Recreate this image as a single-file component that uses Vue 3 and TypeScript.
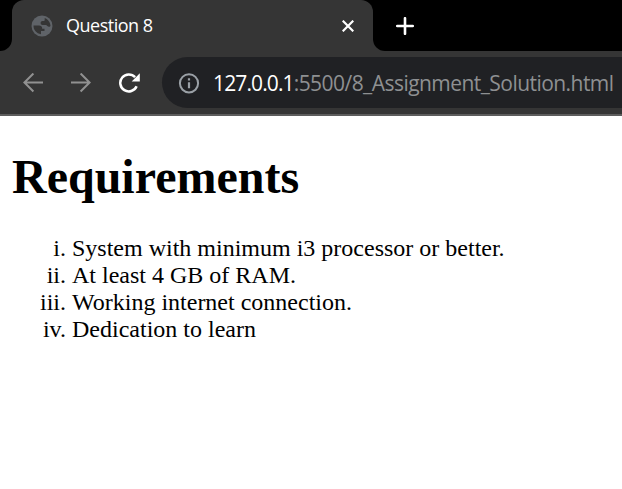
<script setup lang="ts">
const requirements: string[] = [
  'System with minimum i3 processor or better.',
  'At least 4 GB of RAM.',
  'Working internet connection.',
  'Dedication to learn',
]
</script>

<template>
  <div class="window">
    <div class="tabs">
      <div class="edge"><i class="left"></i></div>
      <div class="tab">
        <svg class="globe" width="22" height="22" viewBox="0 0 22 22">
          <circle cx="11" cy="11" r="10.5" fill="#5f6368" />
          <path d="M2.5 10.6H8c2 0 3.2 1.2 3.2 3.1h2.3v2.2H10v3.3C5.6 18.8 2.3 15 2.5 10.6zM13.7 2.9c3.5 1.3 5.7 4.4 5.8 8-1 1.1-2.1 1.2-3.2.2-.6-.7-1-1-2-1h-2.7c-1.2 0-2-.8-2-2 0-1.3.8-2 2-2h1c.8 0 1.1-.5 1.1-1.3z" fill="#353535" />
        </svg>
        <span class="title">Question 8</span>
        <svg class="close" width="12" height="12" viewBox="0 0 12 12"><path d="M.7.7l10.6 10.6M11.3.7L.7 11.3" stroke="#fff" stroke-width="2.2" /></svg>
      </div>
      <div class="edge"><i class="right"></i></div>
      <svg class="plus" width="18" height="18" viewBox="0 0 18 18"><path d="M9 1.200v15.600M1.200 9h15.600" stroke="#fff" stroke-width="2.600" stroke-linecap="round" /></svg>
    </div>
    <div class="toolbar">
      <svg class="nav" width="20" height="20" viewBox="0 0 20 20" fill="none" stroke="#919191" stroke-width="2"><path d="M20 9.500H1.500M10.400.5L1.400 9.500l9 9" /></svg>
      <svg class="nav forward" width="20" height="20" viewBox="0 0 20 20" fill="none" stroke="#919191" stroke-width="2"><path d="M0 9.500h18.500M9.600.5l9 9-9 9" /></svg>
      <svg class="nav reload" width="22" height="20" viewBox="0 0 22 20"><path d="M17.600 13.200A8.500 8.500 0 1 1 16.100 4.200" fill="none" stroke="#fff" stroke-width="2.500" /><path d="M20.800.3v8.100h-8.100z" fill="#fff" /></svg>
      <div class="address">
        <svg class="info" width="22" height="22" viewBox="0 0 22 22"><circle cx="11" cy="11.300" r="9.100" fill="none" stroke="#9aa0a6" stroke-width="2" /><path d="M11 6.300v2.200M11 10.300v6" stroke="#9aa0a6" stroke-width="2.200" /></svg>
        <span class="url"><b>127.0.0.1</b><span>:5500/8_Assignment_Solution.html</span></span>
      </div>
    </div>
    <main>
      <h1>Requirements</h1>
      <ol>
        <li v-for="item in requirements" :key="item">{{ item }}</li>
      </ol>
    </main>
  </div>
</template>

<style>
body {
  margin: 0;
  overflow: hidden;
  background: #fff;
}
</style>

<style scoped>
.window {
  height: 489px;
  overflow: hidden;
  background: #fff;
}
.tabs {
  display: flex;
  height: 51px;
  background: #000;
}
.edge {
  width: 12px;
  background: #353535;
}
.edge i {
  display: block;
  height: 100%;
  background: #000;
}
.left {
  border-bottom-right-radius: 12px;
}
.right {
  border-bottom-left-radius: 12px;
}
.tab {
  box-sizing: border-box;
  display: flex;
  align-items: center;
  width: 361px;
  padding: 0 19px 0 19px;
  border-radius: 12px 12px 0 0;
  background: #353535;
}
.title {
  margin-left: 13px;
  padding-bottom: 2px;
  color: #fff;
  font: 18px/24px "Open Sans", sans-serif;
  letter-spacing: -0.5px;
  white-space: nowrap;
}
.close {
  margin-left: auto;
}
.plus {
  margin: 17px 0 0 11px;
}
.toolbar {
  box-sizing: border-box;
  display: flex;
  align-items: center;
  height: 65px;
  padding-left: 23px;
  border-bottom: 2px solid #5d5d5d;
  background: #353535;
}
.nav {
  flex: none;
}
.forward {
  margin-left: 28px;
}
.reload {
  margin-left: 28px;
}
.address {
  box-sizing: border-box;
  display: flex;
  align-items: center;
  flex: 1;
  height: 51px;
  margin-left: 21px;
  padding-left: 16px;
  border-radius: 26px 0 0 26px;
  background: #202124;
}
.info {
  flex: none;
}
.url {
  margin-left: 13px;
  color: #8e9092;
  font: 21px/28px "Open Sans", sans-serif;
  white-space: nowrap;
}
.url b {
  color: #fff;
  font-weight: 400;
  letter-spacing: -0.88px;
}
.url span {
  letter-spacing: -0.55px;
}
main {
  padding: 34px 12px 0;
  color: #000;
  font: 24px/27px "Liberation Serif", serif;
}
h1 {
  margin: 0 0 31px;
  font-size: 48px;
  line-height: 54px;
}
ol {
  margin: 0;
  padding-left: 60px;
  list-style: lower-roman;
}
</style>
